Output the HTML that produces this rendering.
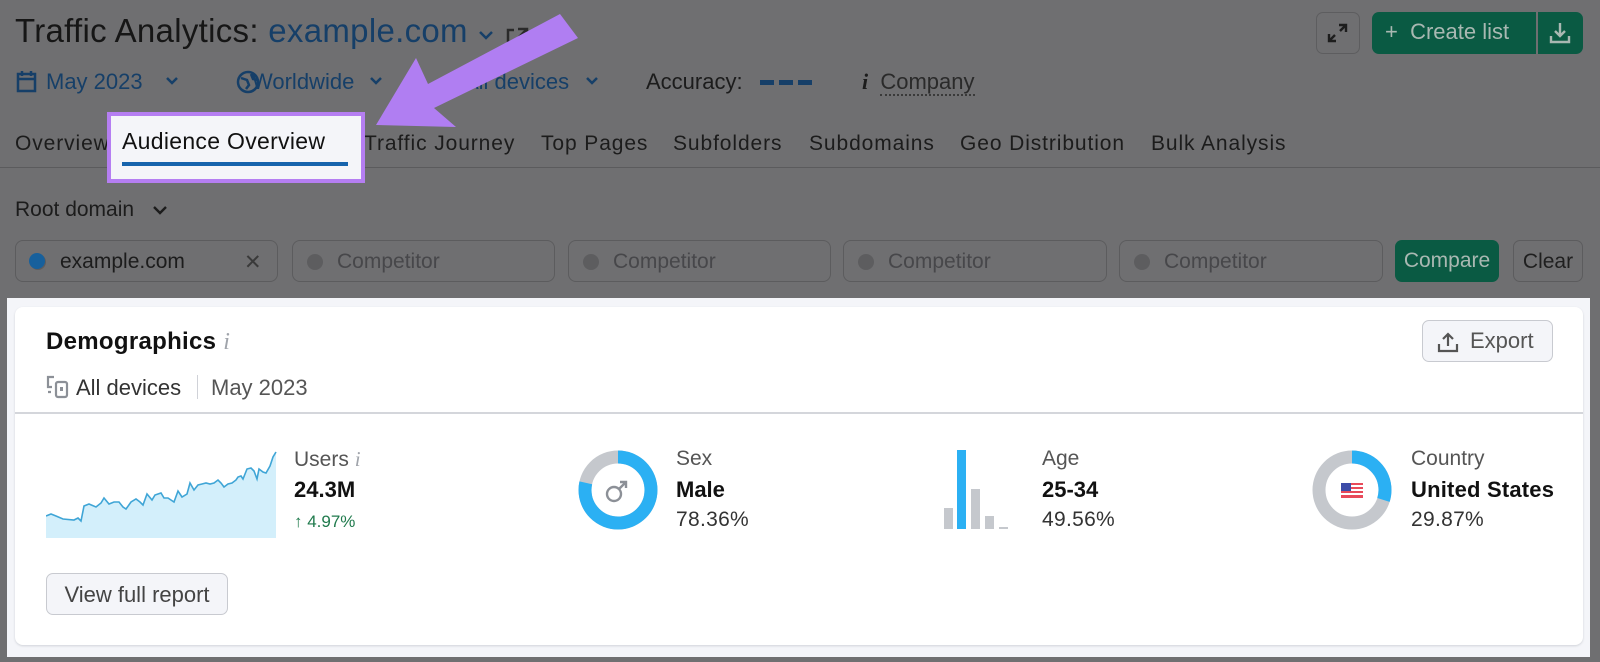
<!DOCTYPE html>
<html><head><meta charset="utf-8"><style>
*{box-sizing:border-box;margin:0;padding:0}
body{width:1600px;height:662px;overflow:hidden;background:#6f6f71;font-family:"Liberation Sans",Arial,sans-serif;position:relative}
.a{position:absolute;white-space:nowrap}
.inp{position:absolute;top:240px;height:42px;border:1px solid #5c5c5e;border-radius:8px;font-size:21px;color:#47474a;padding:9px 0 0 44px}
.inp:before{content:"";position:absolute;left:14px;top:13px;width:16px;height:16px;border-radius:50%;background:#5d5d5f}
.tab{position:absolute;top:132px;font-size:21px;letter-spacing:0.9px;color:#1c1c1c}
</style></head><body>
<div class="a" style="left:15px;top:12px;font-size:33px;letter-spacing:0.3px;color:#161616">Traffic Analytics: <span style="color:#163f68">example.com</span></div>
<svg class="a" style="left:478px;top:26px" width="60" height="24"><path d="M2 6l6 6 6-6" stroke="#163f68" stroke-width="2.5" fill="none"/><path d="M36 4h-6v18h18v-6M40 3h9v9M49 3L37 15" stroke="#2a2a2a" stroke-width="2.5" fill="none"/></svg>
<div class="a" style="left:1316px;top:12px;width:44px;height:42px;border:1px solid #5d5d5f;border-radius:7px"></div>
<svg class="a" style="left:1325px;top:21px" width="26" height="24"><path d="M14 4h7v7M21 4l-6 6M4 13v7h7M4 20l6-6" stroke="#1d1d1d" stroke-width="2.4" fill="none"/></svg>
<div class="a" style="left:1372px;top:12px;width:211px;height:42px;background:#0a5a43;border-radius:7px"></div>
<div class="a" style="left:1536px;top:12px;width:2px;height:42px;background:#6f6f71"></div>
<div class="a" style="left:1385px;top:19px;font-size:22px;color:#a9b8b2">+&nbsp; Create list</div>
<svg class="a" style="left:1548px;top:21px" width="26" height="24"><path d="M12 2v13M7 10l5 5 5-5M3 15v6h18v-6" stroke="#a9b8b2" stroke-width="2.4" fill="none"/></svg>
<svg class="a" style="left:15px;top:70px" width="600" height="26"><rect x="3" y="4" width="17" height="17" stroke="#163f68" stroke-width="2.5" fill="none"/><path d="M3 9h17M7 1v5M16 1v5" stroke="#163f68" stroke-width="2.5"/><path d="M152 8l5 5 5-5" stroke="#163f68" stroke-width="2.5" fill="none"/><circle cx="233" cy="12" r="10" stroke="#163f68" stroke-width="2.5" fill="none"/><path d="M226 8l6 2 2 5-3 4M236 4l2 5 5 1" stroke="#163f68" stroke-width="2.5" fill="none"/><path d="M356 8l5 5 5-5" stroke="#163f68" stroke-width="2.5" fill="none"/><path d="M572 8l5 5 5-5" stroke="#163f68" stroke-width="2.5" fill="none"/></svg>
<div class="a" style="left:46px;top:69px;font-size:22px;color:#163f68">May 2023</div>
<div class="a" style="left:252px;top:69px;font-size:22px;color:#163f68">Worldwide</div>
<div class="a" style="left:464px;top:69px;font-size:22px;color:#163f68">All devices</div>
<div class="a" style="left:646px;top:69px;font-size:22px;color:#1c1c1c">Accuracy:</div>
<div class="a" style="left:760px;top:80px;width:52px;height:5px;background:repeating-linear-gradient(90deg,#163f68 0 14px,transparent 14px 19px)"></div>
<div class="a" style="left:862px;top:69px;font-size:22px;color:#1c1c1c"><i style="font-family:'Liberation Serif';font-weight:bold">i</i>&nbsp; <span style="border-bottom:2px dotted #3a3a3a;color:#2a2a2a">Company</span></div>
<div class="tab" style="left:15px">Overview</div>
<div class="tab" style="left:364px">Traffic Journey</div>
<div class="tab" style="left:541px">Top Pages</div>
<div class="tab" style="left:673px">Subfolders</div>
<div class="tab" style="left:809px">Subdomains</div>
<div class="tab" style="left:960px">Geo Distribution</div>
<div class="tab" style="left:1151px">Bulk Analysis</div>
<div class="a" style="left:0;top:167px;width:1600px;height:1px;background:#5b5b5d"></div>
<div class="a" style="left:107px;top:112px;width:258px;height:71px;border:4px solid #b57ef2;background:#f4f5f9"></div>
<div class="a" style="left:122px;top:128px;font-size:23px;letter-spacing:0.3px;color:#111">Audience Overview</div>
<div class="a" style="left:122px;top:162px;width:226px;height:4px;background:#1764ad"></div>
<svg class="a" style="left:0;top:0" width="620" height="140"><path d="M560 14L578 38L434 108L456 127L376 125L416 58L428 84Z" fill="#b07ef2"/></svg>
<div class="a" style="left:15px;top:198px;font-size:21px;color:#1c1c1c">Root domain</div>
<svg class="a" style="left:152px;top:204px" width="16" height="12"><path d="M2 3l6 6 6-6" stroke="#1c1c1c" stroke-width="2.4" fill="none"/></svg>
<div class="inp" style="left:15px;width:263px;color:#1c1c1c">example.com<span style="position:absolute;left:228px;color:#3a3a3a">✕</span></div>
<div class="a" style="left:29px;top:253px;width:16px;height:16px;border-radius:50%;background:#17609c"></div>
<div class="inp" style="left:292px;width:263px">Competitor</div>
<div class="inp" style="left:568px;width:263px">Competitor</div>
<div class="inp" style="left:843px;width:264px">Competitor</div>
<div class="inp" style="left:1119px;width:264px">Competitor</div>
<div class="a" style="left:1395px;top:240px;width:104px;height:42px;background:#0a5a43;border-radius:7px;color:#a9b8b2;font-size:21px;padding-top:9px;text-align:center">Compare</div>
<div class="a" style="left:1513px;top:240px;width:70px;height:42px;border:1px solid #5c5c5e;border-radius:7px;color:#1f1f1f;font-size:21px;padding-top:9px;text-align:center">Clear</div>
<!-- bottom -->
<div class="a" style="left:7px;top:298px;width:1583px;height:359px;background:#f4f5f9"></div>
<div class="a" style="left:15px;top:307px;width:1568px;height:338px;background:#fff;border-radius:8px;box-shadow:0 1px 2px #d0d2d8"></div>
<div class="a" style="left:46px;top:328px;font-size:24px;font-weight:bold;letter-spacing:0.3px;color:#111">Demographics <i style="font-family:'Liberation Serif';font-weight:normal;color:#a0a4ab">i</i></div>
<div class="a" style="left:1422px;top:320px;width:131px;height:42px;border:1px solid #c8cad0;border-radius:7px;background:#f4f5f9"></div>
<svg class="a" style="left:1436px;top:331px" width="24" height="22"><path d="M12 15V3M7 8l5-5 5 5M3 13v7h18v-7" stroke="#555" stroke-width="2.2" fill="none"/></svg>
<div class="a" style="left:1470px;top:328px;font-size:22px;color:#555">Export</div>
<svg class="a" style="left:46px;top:375px" width="24" height="24"><path d="M8 2H2v10h4M2 17h3" stroke="#8c9097" stroke-width="2.2" fill="none"/><rect x="10" y="7" width="11" height="15" rx="2" stroke="#8c9097" stroke-width="2.2" fill="none"/><rect x="14" y="12" width="3" height="4" fill="#8c9097"/></svg>
<div class="a" style="left:76px;top:375px;font-size:22px;color:#333">All devices</div>
<div class="a" style="left:197px;top:375px;width:1px;height:24px;background:#d0d2d8"></div>
<div class="a" style="left:211px;top:375px;font-size:22px;color:#555">May 2023</div>
<div class="a" style="left:15px;top:412px;width:1568px;height:2px;background:#d4d6db"></div>
<svg class="a" style="left:46px;top:440px" width="232" height="98"><path d="M0 76L5 74L10 76L17 79L28 80L32 78L35 81L38 66L43 64L50 67L55 63L58 58L63 64L68 62L73 62L77 67L80 69L85 62L90 59L94 62L97 65L101 54L106 60L109 55L115 53L118 58L122 58L128 62L132 51L136 57L141 54L144 43L148 50L152 45L156 44L160 43L164 44L168 43L172 40L175 43L178 47L182 44L186 43L190 40L192 37L195 36L197 39L201 29L205 28L208 31L211 39L213 29L217 32L220 33L224 26L227 17L230 12L230 98L0 98Z" fill="#d3effb"/><path d="M0 76L5 74L10 76L17 79L28 80L32 78L35 81L38 66L43 64L50 67L55 63L58 58L63 64L68 62L73 62L77 67L80 69L85 62L90 59L94 62L97 65L101 54L106 60L109 55L115 53L118 58L122 58L128 62L132 51L136 57L141 54L144 43L148 50L152 45L156 44L160 43L164 44L168 43L172 40L175 43L178 47L182 44L186 43L190 40L192 37L195 36L197 39L201 29L205 28L208 31L211 39L213 29L217 32L220 33L224 26L227 17L230 12" stroke="#3fa5d6" stroke-width="1.6" fill="none"/></svg>
<div class="a" style="left:294px;top:447px;font-size:21px;color:#555">Users <i style="font-family:'Liberation Serif';color:#a0a4ab">i</i></div>
<div class="a" style="left:294px;top:477px;font-size:22px;font-weight:bold;color:#111">24.3M</div>
<div class="a" style="left:294px;top:512px;font-size:17px;color:#1f7a4c">↑ 4.97%</div>
<svg class="a" style="left:577px;top:450px" width="82" height="82"><circle cx="41" cy="40" r="33" stroke="#c5c8cd" stroke-width="13" fill="none"/><circle cx="41" cy="40" r="33" stroke="#2bb0f3" stroke-width="13" fill="none" stroke-dasharray="162.5 207.3" transform="rotate(-90 41 40)"/><circle cx="37" cy="44" r="7" stroke="#8c9097" stroke-width="2.4" fill="none"/><path d="M42 39l7-7M43 32h6v6" stroke="#8c9097" stroke-width="2.4" fill="none"/></svg>
<div class="a" style="left:676px;top:447px;font-size:21px;color:#555">Sex</div>
<div class="a" style="left:676px;top:477px;font-size:22px;font-weight:bold;color:#111">Male</div>
<div class="a" style="left:676px;top:508px;font-size:21px;letter-spacing:0.3px;color:#333">78.36%</div>
<svg class="a" style="left:944px;top:449px" width="68" height="84"><rect x="0" y="59" width="9" height="21" fill="#c5c8cd"/><rect x="13" y="1" width="9" height="79" fill="#2bb0f3"/><rect x="27" y="40" width="9" height="40" fill="#c5c8cd"/><rect x="41" y="67" width="9" height="13" fill="#c5c8cd"/><rect x="55" y="78" width="9" height="2" fill="#c5c8cd"/></svg>
<div class="a" style="left:1042px;top:447px;font-size:21px;color:#555">Age</div>
<div class="a" style="left:1042px;top:477px;font-size:22px;font-weight:bold;color:#111">25-34</div>
<div class="a" style="left:1042px;top:508px;font-size:21px;letter-spacing:0.3px;color:#333">49.56%</div>
<svg class="a" style="left:1311px;top:450px" width="82" height="82"><circle cx="41" cy="40" r="33" stroke="#c5c8cd" stroke-width="13" fill="none"/><circle cx="41" cy="40" r="33" stroke="#2bb0f3" stroke-width="13" fill="none" stroke-dasharray="61.9 207.3" transform="rotate(-90 41 40)"/><rect x="30" y="33" width="22" height="15" fill="#e84a5a"/><rect x="30" y="35" width="22" height="2" fill="#fff"/><rect x="30" y="39" width="22" height="2" fill="#fff"/><rect x="30" y="43" width="22" height="2" fill="#fff"/><rect x="30" y="33" width="10" height="8" fill="#3c4ca8"/></svg>
<div class="a" style="left:1411px;top:447px;font-size:21px;color:#555">Country</div>
<div class="a" style="left:1411px;top:477px;font-size:22px;font-weight:bold;letter-spacing:0.2px;color:#111">United States</div>
<div class="a" style="left:1411px;top:508px;font-size:21px;letter-spacing:0.3px;color:#333">29.87%</div>
<div class="a" style="left:46px;top:573px;width:182px;height:42px;border:1px solid #c8cad0;border-radius:7px;background:#f4f5f9;font-size:22px;color:#444;text-align:center;padding-top:8px">View full report</div>
</body></html>
